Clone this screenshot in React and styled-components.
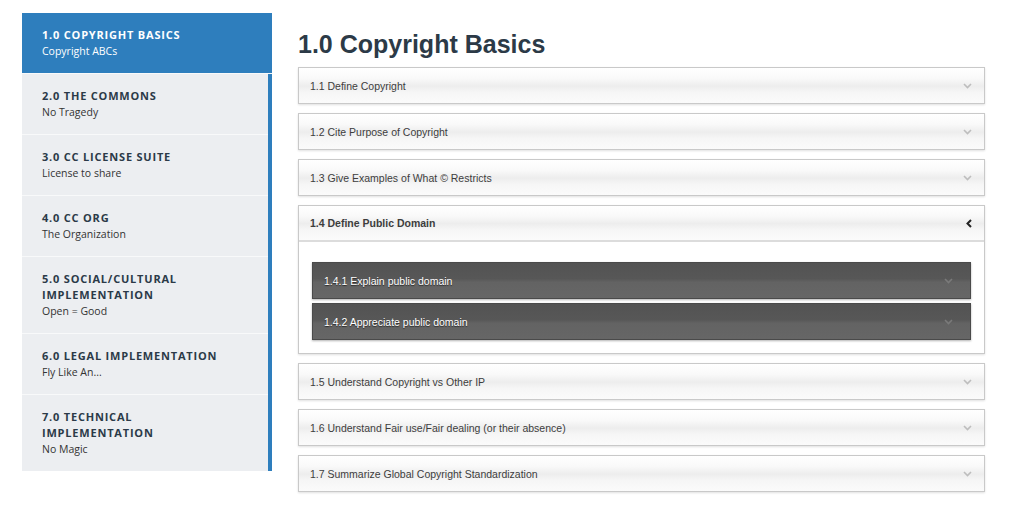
import React from "react";
import styled, { createGlobalStyle } from "styled-components";

const Global = createGlobalStyle`
  html, body { margin: 0; padding: 0; background: #fff; }
  body { font-family: "Liberation Sans", Arial, sans-serif; }
  * { box-sizing: border-box; }
`;

const Page = styled.div`
  display: flex;
  align-items: flex-start;
  gap: 26px;
  padding: 13px 0 0 22px;
  width: 1024px;
  height: 516px;
  overflow: hidden;
`;

const Sidebar = styled.nav`
  width: 250px;
  flex: none;
  display: flex;
  flex-direction: column;
  background: #eceef1;
  border-right: 4px solid #2e7ebd;
`;

const NavItem = styled.div`
  padding: 14px 30px 14px 20px;
  margin-right: ${(p) => (p.$active ? "-4px" : "0")};
  background: ${(p) => (p.$active ? "#2e7ebd" : "#eceef1")};
  border-bottom: 1px solid #f8f9fa;
  font-family: "Open Sans", sans-serif;
  color: ${(p) => (p.$active ? "#fff" : "#2b3a48")};
  &:last-child { border-bottom: none; }
`;

const NavTitle = styled.div`
  font-size: 11px;
  font-weight: 700;
  letter-spacing: 0.8px;
  line-height: 16px;
  text-transform: uppercase;
`;

const NavSub = styled.div`
  font-size: 10.5px;
  line-height: 16px;
  color: ${(p) => (p.$active ? "#fff" : "#333")};
`;

const Main = styled.main`
  width: 687px;
  flex: none;
  display: flex;
  flex-direction: column;
  gap: 9px;
`;

const Heading = styled.h1`
  margin: 16px 0 -1px 0;
  font-family: "Liberation Sans", Arial, sans-serif;
  font-weight: 700;
  font-size: 25px;
  line-height: 30px;
  color: #2c3a47;
`;

const Panel = styled.section`
  border: 1px solid #c9c9c9;
  background: #fff;
  box-shadow: 0 1px 2px rgba(0, 0, 0, 0.12);
`;

const PanelHeader = styled.div`
  height: ${(p) => (p.$open ? "36px" : "35px")};
  display: flex;
  align-items: center;
  justify-content: space-between;
  padding: 0 12px 0 11px;
  background: linear-gradient(#ffffff 0%, #f9f9f9 30%, #ededed 52%, #f6f6f6 70%, #fbfbfb 100%);
  border-bottom: ${(p) => (p.$open ? "2px solid #dcdcdc" : "none")};
  font-size: 10.5px;
  font-weight: ${(p) => (p.$open ? 700 : 400)};
  color: #3d3d3d;
`;

const PanelBody = styled.div`
  padding: 20px 13px 13px 13px;
  display: flex;
  flex-direction: column;
  gap: 4px;
`;

const SubItem = styled.div`
  height: 37px;
  display: flex;
  align-items: center;
  justify-content: space-between;
  padding: 0 17px 0 11px;
  background: linear-gradient(#535353 0%, #575757 45%, #636363 55%, #666 100%);
  border: 1px solid #4a4a4a;
  box-shadow: 0 1px 2px rgba(0, 0, 0, 0.3);
  color: #fff;
  font-size: 10.5px;
  text-shadow: 0 1px 1px rgba(0, 0, 0, 0.6);
`;

const Chevron = ({ dir = "down", color = "#bdbdbd", width = 1.6 }) =>
  dir === "down" ? (
    <svg width="9" height="6" viewBox="0 0 9 6">
      <polyline points="1,1 4.5,4.5 8,1" fill="none" stroke={color} strokeWidth={width} />
    </svg>
  ) : (
    <svg width="6" height="9" viewBox="0 0 6 9">
      <polyline points="5,1 1.5,4.5 5,8" fill="none" stroke={color} strokeWidth={width} />
    </svg>
  );

const nav = [
  ["1.0 Copyright Basics", "Copyright ABCs", true],
  ["2.0 The Commons", "No Tragedy"],
  ["3.0 CC License Suite", "License to share"],
  ["4.0 CC Org", "The Organization"],
  ["5.0 Social/Cultural Implementation", "Open = Good"],
  ["6.0 Legal Implementation", "Fly Like An..."],
  ["7.0 Technical Implementation", "No Magic"],
];

const panels = [
  "1.1 Define Copyright",
  "1.2 Cite Purpose of Copyright",
  "1.3 Give Examples of What © Restricts",
  "1.4 Define Public Domain",
  "1.5 Understand Copyright vs Other IP",
  "1.6 Understand Fair use/Fair dealing (or their absence)",
  "1.7 Summarize Global Copyright Standardization",
];

const subs = ["1.4.1 Explain public domain", "1.4.2 Appreciate public domain"];

export default function App() {
  return (
    <>
      <Global />
      <Page>
        <Sidebar>
          {nav.map(([t, s, a]) => (
            <NavItem key={t} $active={a}>
              <NavTitle>{t}</NavTitle>
              <NavSub $active={a}>{s}</NavSub>
            </NavItem>
          ))}
        </Sidebar>
        <Main>
          <Heading>1.0 Copyright Basics</Heading>
          {panels.map((p, i) => {
            const open = i === 3;
            return (
              <Panel key={p}>
                <PanelHeader $open={open}>
                  <span>{p}</span>
                  {open ? <Chevron dir="left" color="#222" width={2} /> : <Chevron />}
                </PanelHeader>
                {open && (
                  <PanelBody>
                    {subs.map((s) => (
                      <SubItem key={s}>
                        <span>{s}</span>
                        <Chevron color="#7a7a7a" />
                      </SubItem>
                    ))}
                  </PanelBody>
                )}
              </Panel>
            );
          })}
        </Main>
      </Page>
    </>
  );
}
